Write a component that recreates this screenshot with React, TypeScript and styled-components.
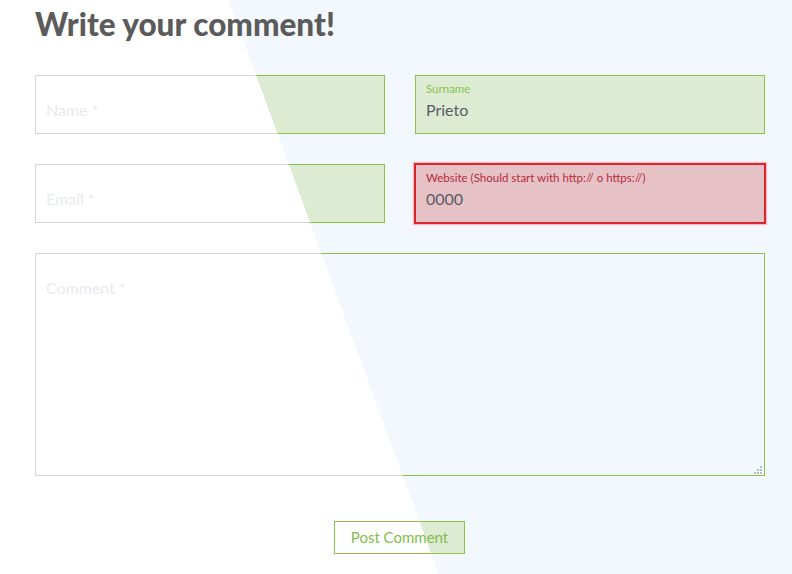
import React from "react";
import styled, { createGlobalStyle } from "styled-components";

const SPLIT_ANGLE = "69.9deg";
const SPLIT_STOP = "412px";

const split = (left: string, right: string) =>
  `linear-gradient(${SPLIT_ANGLE}, ${left} ${SPLIT_STOP}, ${right} ${SPLIT_STOP})`;

const PAGE_BG = split("#ffffff", "#f3f8fe");
const FIELD_BG = split("#ffffff", "#dcebd2");
const BORDER_BG = split("#d6d6d6", "#8bc34a");

const GlobalStyle = createGlobalStyle`
  html, body {
    margin: 0;
    padding: 0;
    height: 100%;
    overflow: hidden;
  }
  body {
    background: ${PAGE_BG} fixed;
    font-family: Lato, "Liberation Sans", sans-serif;
    color: #5a5a5a;
  }
  * { box-sizing: border-box; }
`;

const Page = styled.div`
  padding: 4px 27px 0 35px;
`;

const Title = styled.h1`
  margin: 0;
  font-family: Lato, "Liberation Sans", sans-serif;
  font-weight: 900;
  font-size: 31.5px;
  line-height: 40px;
  color: #5b5b5b;
`;

const Form = styled.form`
  margin-top: 31px;
  display: grid;
  grid-template-columns: 350px 350px;
  grid-template-rows: 59px 59px 223px auto;
  column-gap: 30px;
  row-gap: 30px;
`;

const FieldBox = styled.label<{ $error?: boolean }>`
  display: grid;
  grid-template-rows: 14px 20px;
  row-gap: 4px;
  align-content: start;
  padding: 6px 10px 0;
  height: 59px;
  border: 1px solid transparent;
  background: ${(p) =>
    p.$error
      ? "#e6c2c7"
      : `${FIELD_BG} fixed padding-box, ${BORDER_BG} fixed border-box`};
  ${(p) =>
    p.$error &&
    `
    border-color: #d9222c;
    box-shadow: 0 0 0 1px #dc2a33, 0 0 1px 2px rgba(236, 140, 150, 0.55);
  `}
`;

const FieldLabel = styled.span<{ $error?: boolean }>`
  font-size: 11.5px;
  line-height: 14px;
  color: ${(p) => (p.$error ? "#b82a3a" : "#8bc34a")};
  white-space: nowrap;
`;

const Input = styled.input`
  display: block;
  width: 100%;
  height: 20px;
  margin: 0;
  padding: 0;
  border: 0;
  outline: none;
  background: transparent;
  font-family: Lato, "Liberation Sans", sans-serif;
  font-size: 16px;
  line-height: 20px;
  color: #5b5b66;
  &::placeholder {
    color: #e8eaee;
    opacity: 1;
  }
`;

const CommentWrap = styled.div`
  position: relative;
  grid-column: 1 / span 2;
  display: flex;
`;

const TextArea = styled.textarea`
  flex: 1;
  margin: 0;
  padding: 24px 10px;
  height: 223px;
  border: 1px solid transparent;
  background: ${PAGE_BG} fixed padding-box, ${BORDER_BG} fixed border-box;
  font-family: Lato, "Liberation Sans", sans-serif;
  font-size: 16px;
  line-height: 20px;
  color: #5b5b66;
  resize: none;
  outline: none;
  &::placeholder {
    color: #e8eaee;
    opacity: 1;
  }
`;

const Grip = styled.svg`
  position: absolute;
  right: 3px;
  bottom: 2px;
  width: 8px;
  height: 8px;
  pointer-events: none;
`;

const Actions = styled.div`
  grid-column: 1 / span 2;
  display: flex;
  justify-content: center;
  padding-top: 15px;
`;

const SubmitButton = styled.button`
  width: 131px;
  height: 33px;
  margin: 0 0 0 -1px;
  padding: 0;
  border: 1px solid #8bc34a;
  background: ${FIELD_BG} fixed padding-box, #8bc34a border-box;
  color: #83bd4c;
  font-family: Lato, "Liberation Sans", sans-serif;
  font-size: 15px;
  line-height: 31px;
  cursor: pointer;
`;

type FieldProps = {
  label?: string;
  placeholder?: string;
  value?: string;
  error?: boolean;
};

const Field = ({ label, placeholder, value, error }: FieldProps) => (
  <FieldBox $error={error}>
    <FieldLabel $error={error}>{label ?? ""}</FieldLabel>
    <Input placeholder={placeholder} defaultValue={value} />
  </FieldBox>
);

export default function App() {
  return (
    <>
      <GlobalStyle />
      <Page>
        <Title>Write your comment!</Title>
        <Form onSubmit={(e) => e.preventDefault()}>
          <Field placeholder="Name *" />
          <Field label="Surname" value="Prieto" />
          <Field placeholder="Email *" />
          <Field
            label="Website (Should start with http:// o https://)"
            value="0000"
            error
          />
          <CommentWrap>
            <TextArea placeholder="Comment *" />
            <Grip viewBox="0 0 8 8">
              <rect x="6" y="0" width="2" height="2" fill="#bdbdbd" />
              <rect x="3" y="3" width="2" height="2" fill="#bdbdbd" />
              <rect x="6" y="3" width="2" height="2" fill="#bdbdbd" />
              <rect x="0" y="6" width="2" height="2" fill="#bdbdbd" />
              <rect x="3" y="6" width="2" height="2" fill="#bdbdbd" />
              <rect x="6" y="6" width="2" height="2" fill="#bdbdbd" />
            </Grip>
          </CommentWrap>
          <Actions>
            <SubmitButton type="submit">Post Comment</SubmitButton>
          </Actions>
        </Form>
      </Page>
    </>
  );
}
